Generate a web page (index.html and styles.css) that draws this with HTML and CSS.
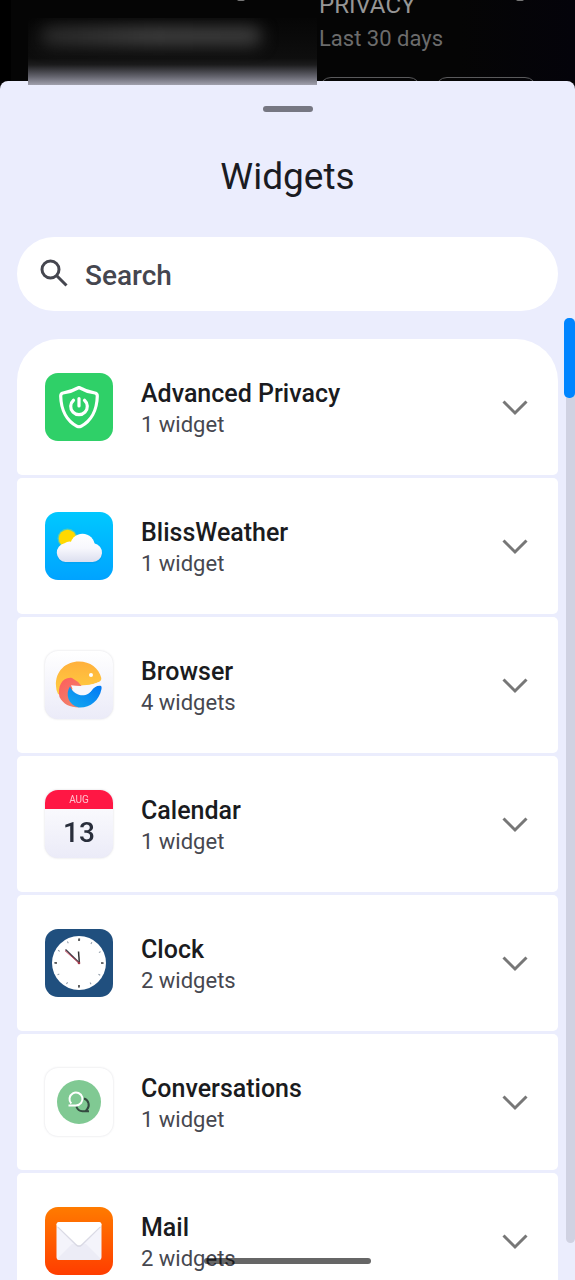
FILE: index.html
```html
<!DOCTYPE html>
<html lang="en">
<head>
<meta charset="utf-8">
<meta name="viewport" content="width=device-width, initial-scale=1">
<title>Widgets</title>
<link rel="stylesheet" href="styles.css">
</head>
<body>
<div class="screen">
  <div class="backdrop">
    <div class="panel"><span class="dot"></span></div>
    <div class="panel">
      <span class="dot"></span>
      <div class="panel-title">PRIVACY</div>
      <div class="panel-sub">Last 30 days</div>
      <div class="chips"><span class="chip"></span><span class="chip"></span></div>
    </div>
  </div>
  <main class="sheet">
    <div class="handle"></div>
    <h1 class="title">Widgets</h1>
    <label class="search">
      <svg class="search-icon" viewBox="0 0 28 28" fill="none" stroke="#45464f" stroke-width="3"><circle cx="10.500" cy="10.500" r="8.500"/><path d="M16.500 16.500L26.500 26.500"/></svg>
      <input class="search-input" type="text" placeholder="Search" aria-label="Search">
    </label>
    <div class="list">
      <button class="row" type="button">
        <svg class="app" viewBox="0 0 68 68"><rect width="68" height="68" rx="13" fill="#2fd068"/><g fill="none" stroke="#fff" stroke-width="3.200" stroke-linecap="round" stroke-linejoin="round"><path d="M34 14.500Q42 19 50 20Q52.300 20.500 52.300 23C52 37 46 48 36 53.300Q34 54.200 32 53.300C22 48 16 37 15.700 23Q15.700 20.500 18 20Q26 19 34 14.500Z"/><path d="M28.500 27.200A8.300 8.300 0 1 0 39.500 27.200M34 25.500V33"/></g></svg>
        <span class="text"><span class="name">Advanced Privacy</span><span class="count">1 widget</span></span>
        <svg class="chevron" viewBox="0 0 26 16"><path d="M1.500 1.500L13 13L24.500 1.500"/></svg>
      </button>
      <button class="row" type="button">
        <svg class="app" viewBox="0 0 68 68"><defs><linearGradient id="sky" x2="0" y2="1"><stop stop-color="#00c8ff"/><stop offset="1" stop-color="#00a3ff"/></linearGradient><linearGradient id="cloud" gradientUnits="userSpaceOnUse" x1="0" y1="22" x2="0" y2="50"><stop stop-color="#fff"/><stop offset=".5" stop-color="#f8f8fd"/><stop offset="1" stop-color="#dcdfef"/></linearGradient></defs><rect width="68" height="68" rx="13" fill="url(#sky)"/><circle cx="22.500" cy="26.500" r="10" fill="#a8d968" opacity=".5"/><circle cx="22.500" cy="26.500" r="8.700" fill="#ffd900"/><path d="M20 51.500a9.600 9.600 0 0 1 0-19h28a9.500 9.500 0 0 1 0 19z" fill="#0083cc" opacity=".2"/><g fill="url(#cloud)"><circle cx="37.500" cy="34" r="12.300"/><path d="M20.500 50A9.500 9.500 0 0 1 19.500 31.200Q23.500 28.500 27 30L37 40L49 31.300A9.400 9.400 0 0 1 47.500 50Z"/></g></svg>
        <span class="text"><span class="name">BlissWeather</span><span class="count">1 widget</span></span>
        <svg class="chevron" viewBox="0 0 26 16"><path d="M1.500 1.500L13 13L24.500 1.500"/></svg>
      </button>
      <button class="row" type="button">
        <svg class="app shaded" viewBox="0 0 68 68"><defs><linearGradient id="paper" x2="0" y2="1"><stop stop-color="#fff"/><stop offset="1" stop-color="#ebebf8"/></linearGradient><linearGradient id="gold" x2="0" y2="1"><stop stop-color="#ffb03c"/><stop offset="1" stop-color="#ffd041"/></linearGradient><linearGradient id="coral" x2=".7" y2="1"><stop stop-color="#ff5c5c"/><stop offset="1" stop-color="#ef856c"/></linearGradient><linearGradient id="blue" x1="1" x2="0" y2="1"><stop stop-color="#0077f5"/><stop offset="1" stop-color="#15abef"/></linearGradient></defs><rect width="68" height="68" rx="13" fill="url(#paper)"/><path d="M11 35C10 20 21 10.500 34 10.500C45 10.500 54 17 56.300 27Q56.500 30 53 31.500C46 34.500 38 34 30 35L20 46L13 43Q11 39 11 35Z" fill="url(#gold)"/><path d="M14.500 46C12 35 18 25.500 27 27Q33 30 37 35.500L27 36L27.500 45L34 56.500C25 56.500 18 53 14.500 46Z" fill="url(#coral)"/><path d="M25 35.500C29 45 42 48 47 38.500Q50 34.500 55 34.500Q57 34.500 56.500 38C54 50 45 57 34 56.500C23 54 20 43 25 35.500Z" fill="url(#blue)"/><path d="M26 34.300Q40 36.500 49 32.800L58 29.500V34.500H54Q50 35 47 39C42 46.500 30 45.500 26 34.300Z" fill="#f7f7fd"/><circle cx="46" cy="24" r="2" fill="#fff"/></svg>
        <span class="text"><span class="name">Browser</span><span class="count">4 widgets</span></span>
        <svg class="chevron" viewBox="0 0 26 16"><path d="M1.500 1.500L13 13L24.500 1.500"/></svg>
      </button>
      <button class="row" type="button">
        <svg class="app shaded" viewBox="0 0 68 68"><rect width="68" height="68" rx="13" fill="url(#paper)"/><path d="M0 19V13A13 13 0 0 1 13 0H55A13 13 0 0 1 68 13V19Z" fill="#ff1744"/><text x="34" y="13" class="month">AUG</text><text x="34" y="52" class="day">13</text></svg>
        <span class="text"><span class="name">Calendar</span><span class="count">1 widget</span></span>
        <svg class="chevron" viewBox="0 0 26 16"><path d="M1.500 1.500L13 13L24.500 1.500"/></svg>
      </button>
      <button class="row" type="button">
        <svg class="app" viewBox="0 0 68 68"><rect width="68" height="68" rx="13" fill="#204f7e"/><circle cx="34" cy="34" r="27" fill="#fff"/><g fill="none"><circle cx="34" cy="34" r="23.500" stroke="#8d98a5" stroke-width="2" stroke-dasharray="1 11.305" stroke-dashoffset=".5"/><path d="M34 9.500v2.500M34 56v2.500M9.500 34h2.500M56 34h2.500" stroke="#444" stroke-width="1.600"/><path d="M34.300 33L33.500 22.500" stroke="#333" stroke-width="1.500"/><path d="M34 33.500L20.500 20.500" stroke="#444049" stroke-width="1.500"/><path d="M34.300 34.500L20 21.700" stroke="#c44960" stroke-width="1"/></g><circle cx="34" cy="34" r="1.300" fill="#a03848"/></svg>
        <span class="text"><span class="name">Clock</span><span class="count">2 widgets</span></span>
        <svg class="chevron" viewBox="0 0 26 16"><path d="M1.500 1.500L13 13L24.500 1.500"/></svg>
      </button>
      <button class="row" type="button">
        <svg class="app shaded" viewBox="0 0 68 68"><rect width="68" height="68" rx="13" fill="#fff"/><circle cx="34" cy="34" r="22" fill="#80c993"/><g fill="none" stroke-width="2"><path d="M39 30.500A6.800 6.800 0 0 1 42 41.500L40.500 43.200H44M44 43.200H37.500Q33 43 31.300 38.500" stroke="#344b40"/><path d="M23.500 37.500H31A6.500 6.500 0 1 0 26.300 35.500" stroke="#fff"/></g></svg>
        <span class="text"><span class="name">Conversations</span><span class="count">1 widget</span></span>
        <svg class="chevron" viewBox="0 0 26 16"><path d="M1.500 1.500L13 13L24.500 1.500"/></svg>
      </button>
      <button class="row" type="button">
        <svg class="app" viewBox="0 0 68 68"><defs><linearGradient id="orange" x2="0" y2="1"><stop stop-color="#ff7b00"/><stop offset="1" stop-color="#ff3d00"/></linearGradient></defs><rect width="68" height="68" rx="13" fill="url(#orange)"/><rect x="11.500" y="15" width="45" height="38" rx="3" fill="#f4f4fb"/><path d="M12 52L27 37H41L56 52Q55 53 53 53H15Q13 53 12 52Z" fill="#ececf6"/><path d="M12 20L31 38.700Q34 41.500 37 38.700L56 20Z" fill="#dadae5"/><path d="M11.500 18Q11.500 15 14.500 15H53.500Q56.500 15 56.500 18L37 36.700Q34 39.700 31 36.700Z" fill="#fff"/></svg>
        <span class="text"><span class="name">Mail</span><span class="count">2 widgets</span></span>
        <svg class="chevron" viewBox="0 0 26 16"><path d="M1.500 1.500L13 13L24.500 1.500"/></svg>
      </button>
    </div>
  </main>
  <div class="redacted"><span class="smudge"></span></div>
  <div class="track"><div class="thumb"></div></div>
  <div class="nav-pill"></div>
</div>
</body>
</html>
```
FILE: styles.css
```css
* { box-sizing: border-box; }
body {
  margin: 0;
  background: #030304;
  font-family: Roboto, "Liberation Sans", sans-serif;
}
.screen {
  position: relative;
  height: 100vh;
  overflow: hidden;
  display: flex;
  flex-direction: column;
}
.backdrop {
  flex: none;
  height: 81px;
  display: grid;
  grid-template-columns: 281fr 282fr;
  padding: 0 0 0 12px;
  overflow: hidden;
  background: linear-gradient(90deg, #000 0 2%, #050505 2% 80%, #04030a);
}
.panel {
  position: relative;
  padding-left: 26px;
  color: #969696;
}
.dot {
  position: absolute;
  top: -3px;
  right: 48px;
  width: 8px;
  height: 4px;
  border-radius: 4px;
  background: #777;
}
.panel:last-child .dot { right: 51px; }
.panel-title { font-size: 24px; line-height: 28px; margin-top: -9px; }
.panel-sub { font-size: 22px; line-height: 28px; margin-top: 6px; color: #6c6c6c; }
.chips { display: flex; gap: 14px; margin: 24px 38px 0 0; }
.chip {
  flex: 1;
  height: 40px;
  border: 1px solid #5a5a5c;
  border-radius: 12px;
}
.sheet {
  flex: 1;
  min-height: 0;
  display: flex;
  flex-direction: column;
  padding: 25px 17px 0;
  border-radius: 8px 8px 0 0;
  background: #ebedfd;
}
.handle {
  flex: none;
  align-self: center;
  width: 50px;
  height: 6px;
  border-radius: 3px;
  background: #767782;
}
.title {
  margin: 41px 0 36px;
  text-align: center;
  font-size: 37px;
  line-height: 48px;
  font-weight: 400;
  color: #1a1b22;
}
.search {
  flex: none;
  display: flex;
  align-items: center;
  gap: 17px;
  height: 74px;
  padding: 0 23px;
  border-radius: 37px;
  background: #fff;
}
.search-icon { flex: none; width: 28px; height: 28px; margin-bottom: 2px; }
.search-input {
  flex: 1;
  min-width: 0;
  padding: 3px 0 0;
  border: 0;
  outline: 0;
  background: none;
  font: 500 28px/36px Roboto, "Liberation Sans", sans-serif;
  color: #45464f;
}
.search-input::placeholder { color: #45464f; opacity: 1; }
.list {
  display: flex;
  flex-direction: column;
  gap: 3px;
  margin-top: 28px;
}
.row {
  flex: none;
  display: flex;
  align-items: center;
  gap: 28px;
  width: 100%;
  height: 136px;
  padding: 0 30px 0 28px;
  border: 0;
  border-radius: 5px;
  background: #fff;
  font-family: inherit;
  text-align: left;
}
.row:first-child { border-radius: 42px 42px 5px 5px; }
.app { flex: none; width: 68px; height: 68px; overflow: visible; }
.shaded { filter: drop-shadow(0 0 1px rgba(60, 60, 90, .18)); }
.text { flex: 1; display: flex; flex-direction: column; padding-top: 4px; }
.name { font-size: 25px; line-height: 32px; font-weight: 500; color: #1a1b20; }
.count { font-size: 22px; line-height: 30px; color: #46474f; }
.chevron {
  flex: none;
  width: 26px;
  height: 16px;
  margin-top: 2px;
  fill: none;
  stroke: #777;
  stroke-width: 3;
}
.month { font-size: 10px; text-anchor: middle; fill: #ffc2cd; }
.day { font-size: 28px; font-weight: 500; text-anchor: middle; fill: #292e3b; }
.redacted {
  position: absolute;
  top: 18px;
  left: 28px;
  width: 289px;
  height: 67px;
  overflow: hidden;
  background: linear-gradient(#060606, #0e0e0e 60%, #1c1c1d 70%, #666670 88%, #a0a0ac);
}
.smudge {
  display: block;
  width: 222px;
  height: 20px;
  margin: 8px 12px;
  border-radius: 10px;
  background: linear-gradient(90deg, #2a2a2a, #404040 50%, #3c3c3c);
  filter: blur(8px);
}
.track {
  position: absolute;
  top: 318px;
  right: 0;
  bottom: 37px;
  width: 9px;
  border-radius: 5px;
  background: #d0d2e2;
}
.thumb {
  width: 11px;
  height: 80px;
  margin-left: -2px;
  border-radius: 5px;
  background: #0085ff;
}
.nav-pill {
  position: absolute;
  left: 50%;
  bottom: 16px;
  width: 167px;
  height: 6px;
  margin-left: -84px;
  border-radius: 3px;
  background: rgba(0, 0, 0, .6);
}
```
